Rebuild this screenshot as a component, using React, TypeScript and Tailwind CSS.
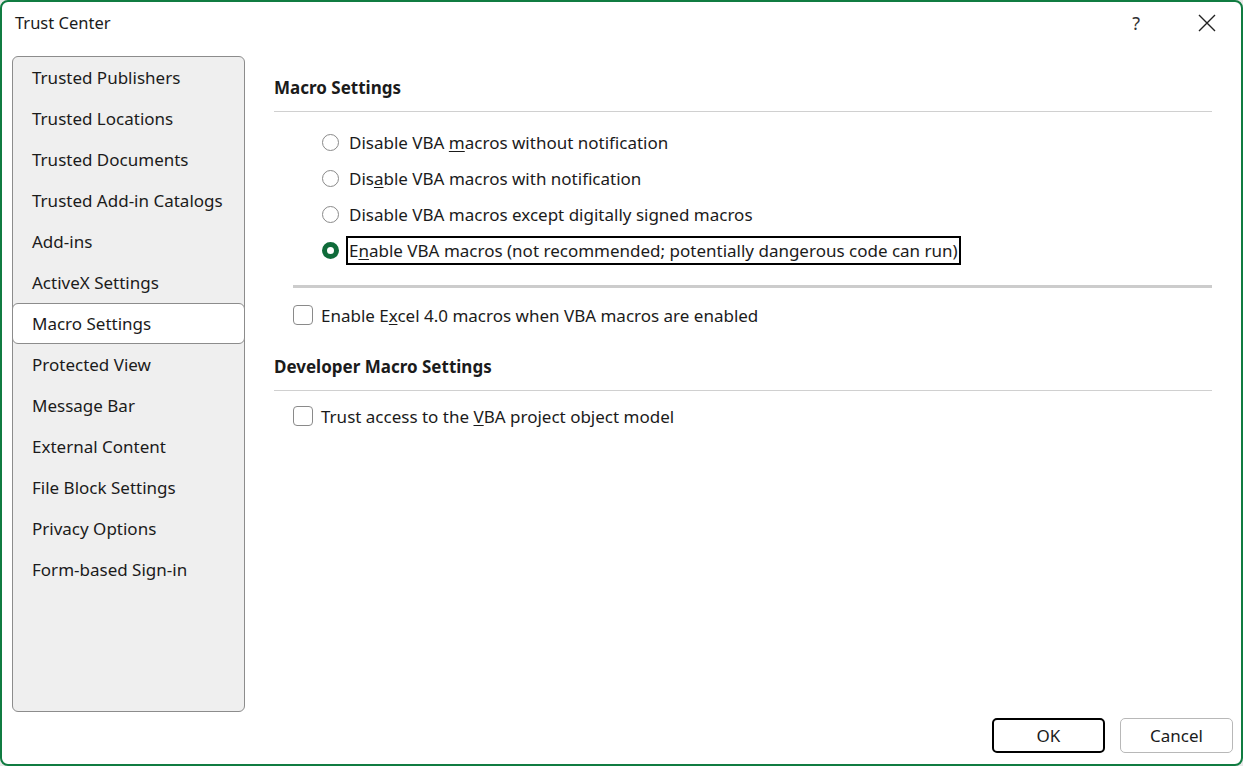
import React from 'react'

const navItems = [
  'Trusted Publishers',
  'Trusted Locations',
  'Trusted Documents',
  'Trusted Add-in Catalogs',
  'Add-ins',
  'ActiveX Settings',
  'Macro Settings',
  'Protected View',
  'Message Bar',
  'External Content',
  'File Block Settings',
  'Privacy Options',
  'Form-based Sign-in',
]

function Radio({ checked }: { checked?: boolean }) {
  if (checked) {
    return <span className="h-[17px] w-[17px] shrink-0 rounded-full border-[5px] border-[#0f6b3a] bg-white" />
  }
  return <span className="h-[17px] w-[17px] shrink-0 rounded-full border border-[#8a8a8a] bg-white" />
}

function Checkbox() {
  return <span className="h-[20px] w-[20px] shrink-0 rounded-[4px] border border-[#8a8a8a] bg-white" />
}

export default function App() {
  const [selected] = React.useState('Macro Settings')

  return (
    <div
      className="h-[766px] w-[1243px] bg-[#e8e8e8] text-[#1b1b1b]"
      style={{ fontFamily: '"Noto Sans", "Open Sans", sans-serif' }}
    >
      <div className="flex h-full w-full flex-col rounded-[8px] border-2 border-[#107c41] bg-white">
        {/* Title bar */}
        <div className="flex h-[42px] shrink-0 items-center pl-[13px]">
          <span className="text-[16.5px]">Trust Center</span>
          <div className="ml-auto flex items-center">
            <span className="mr-[58px] text-[18px] text-[#333]">?</span>
            <svg width="18" height="18" viewBox="0 0 18 18" className="mr-[25px]">
              <path d="M1 1 L17 17 M17 1 L1 17" stroke="#222" strokeWidth="1.4" />
            </svg>
          </div>
        </div>

        <div className="flex min-h-0 flex-1 pl-[10px]">
          {/* Sidebar */}
          <div className="mt-[12px] h-[656px] w-[233px] shrink-0 rounded-[6px] border border-[#8c8c8c] bg-[#efefef]">
            <div className="flex flex-col">
              {navItems.map((item) => (
                <div
                  key={item}
                  className={`flex h-[41px] items-center pl-[19px] text-[17px] ${
                    item === selected
                      ? '-mx-px rounded-[6px] border border-[#8c8c8c] bg-white'
                      : ''
                  }`}
                >
                  {item}
                </div>
              ))}
            </div>
          </div>

          {/* Content */}
          <div className="flex min-w-0 flex-1 flex-col">
            <div className="pl-[29px] pr-[29px] pt-[31px]">
              <div className="text-[17px] font-bold">Macro Settings</div>
              <div className="mt-[10px] h-px bg-[#d0d0d0]" />

              <div className="mt-[13px] flex flex-col pl-[48px]">
                <label className="flex h-[36px] items-center gap-[10px] text-[17px]">
                  <Radio />
                  <span>
                    Disable VBA <span className="underline underline-offset-2">m</span>acros without notification
                  </span>
                </label>
                <label className="flex h-[36px] items-center gap-[10px] text-[17px]">
                  <Radio />
                  <span>
                    Dis<span className="underline underline-offset-2">a</span>ble VBA macros with notification
                  </span>
                </label>
                <label className="flex h-[36px] items-center gap-[10px] text-[17px]">
                  <Radio />
                  <span>
                    Disable VBA macros except di<span className="underline underline-offset-2">g</span>itally signed macros
                  </span>
                </label>
                <label className="flex h-[36px] items-center gap-[7px] text-[17px]">
                  <Radio checked />
                  <span className="border-2 border-black px-[1px] leading-[25px]">
                    E<span className="underline underline-offset-2">n</span>able VBA macros (not recommended; potentially dangerous code can run)
                  </span>
                </label>
              </div>

              <div className="ml-[19px] mt-[16px] h-[3px] bg-[#cccccc]" />

              <label className="ml-[19px] mt-[15px] flex items-center gap-[8px] text-[17px]">
                <Checkbox />
                <span>
                  Enable E<span className="underline underline-offset-2">x</span>cel 4.0 macros when VBA macros are enabled
                </span>
              </label>

              <div className="mt-[26px] text-[17px] font-bold">Developer Macro Settings</div>
              <div className="mt-[10px] h-px bg-[#d0d0d0]" />

              <label className="ml-[19px] mt-[13px] flex items-center gap-[8px] text-[17px]">
                <Checkbox />
                <span>
                  Trust access to the <span className="underline underline-offset-2">V</span>BA project object model
                </span>
              </label>
            </div>

            <div className="mt-auto flex justify-end gap-[15px] pb-[11px] pr-[8px]">
              <button className="h-[35px] w-[113px] rounded-[5px] border-2 border-black bg-white text-[17px]">OK</button>
              <button className="h-[35px] w-[113px] rounded-[5px] border border-[#b8b8b8] bg-white text-[17px]">
                Cancel
              </button>
            </div>
          </div>
        </div>
      </div>
    </div>
  )
}
